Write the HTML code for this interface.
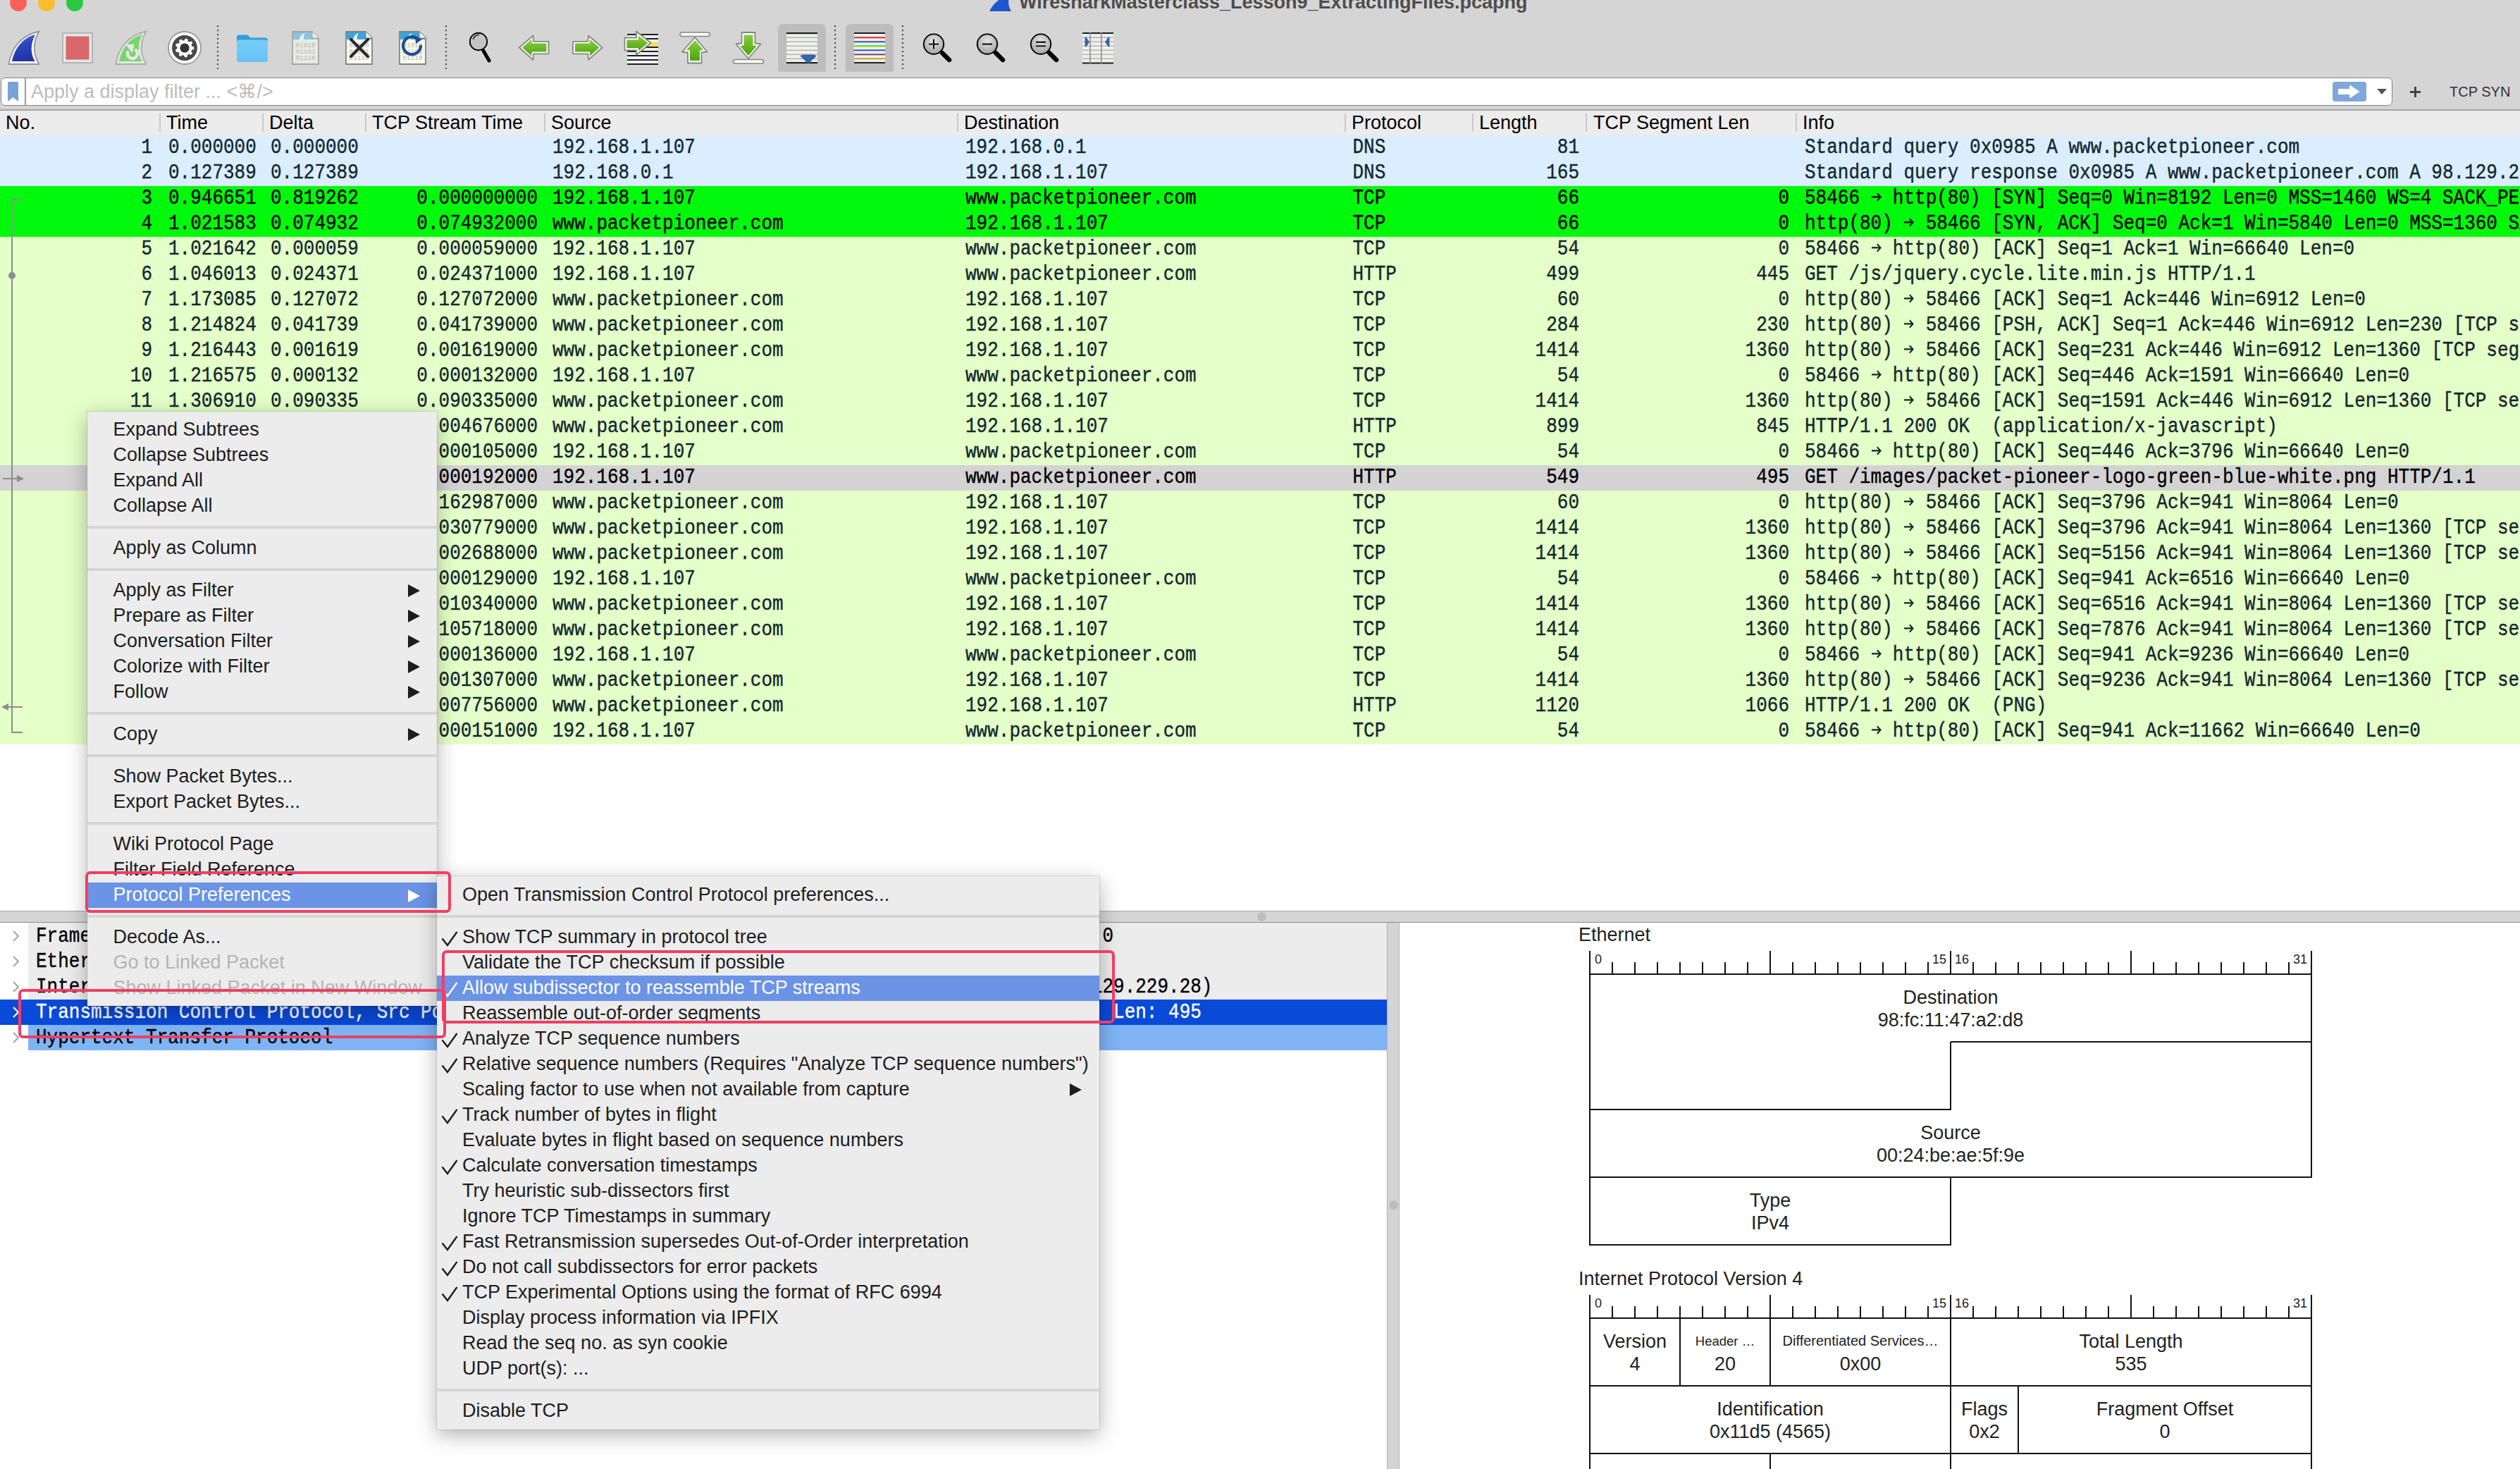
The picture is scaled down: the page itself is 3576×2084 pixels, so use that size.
<!DOCTYPE html><html><head><meta charset="utf-8"><style>
*{margin:0;padding:0;box-sizing:border-box}
html,body{width:3576px;height:2084px;overflow:hidden;background:#d5d5d5;position:relative;font-family:"Liberation Sans", sans-serif}
.a{position:absolute}
.t{position:absolute;white-space:pre;line-height:36px;height:36px}
.m{font-family:"Liberation Mono", monospace;font-size:26px;color:#12272e;transform:scaleY(1.12);transform-origin:0 25px;-webkit-text-stroke-width:0.35px;top:-0.5px}
.tm{top:0}
.ar{display:inline-block;width:15.6px;height:36px;vertical-align:top;position:relative}
.s{font-family:"Liberation Sans", sans-serif;font-size:27px;color:#000}
.r{text-align:right}
.row{position:absolute;left:0;width:3576px;height:36px}
.hd{position:absolute;top:161px;width:2px;height:26px;background:#c9c9c9}
.mi{position:absolute;left:0;right:0;height:36px;line-height:36px;font-size:27px;color:#1d1d1d;white-space:pre}
.sep{position:absolute;left:0;right:0;height:4px;background:#d6d6d6}
.arr{position:absolute;width:0;height:0;border-top:9px solid transparent;border-bottom:9px solid transparent;border-left:17px solid #1d1d1d}
.ck{position:absolute}
.red{position:absolute;border:4px solid #f03e64;border-radius:7px}
.dg{position:absolute;font-size:27px;color:#222;text-align:center;line-height:32px;white-space:pre}
</style></head><body>
<div class="a" style="left:14px;top:-8px;width:24px;height:24px;border-radius:50%;background:#fe5f57"></div>
<div class="a" style="left:54px;top:-8px;width:24px;height:24px;border-radius:50%;background:#febc2e"></div>
<div class="a" style="left:94px;top:-8px;width:24px;height:24px;border-radius:50%;background:#28c840"></div>
<div class="a" style="left:1446px;top:-15px;font-weight:bold;font-size:27px;color:#4d4d4d;white-space:pre;line-height:36px">WiresharkMasterclass_Lesson9_ExtractingFiles.pcapng</div>
<svg class="a" style="left:1402px;top:-6px" width="36" height="24" viewBox="0 0 36 24"><path d="M2 22 C8 10 18 2 32 -2 C28 6 28 14 33 22 Z" fill="#1f55d0"/></svg>
<svg class="a" style="left:0;top:0" width="1600" height="110" viewBox="0 0 1600 110"><defs><linearGradient id="gb" x1="0" y1="0" x2="0.3" y2="1"><stop offset="0" stop-color="#6a7fe0"/><stop offset="0.45" stop-color="#2f47c0"/><stop offset="1" stop-color="#2234a8"/></linearGradient><linearGradient id="gg" x1="0" y1="0" x2="0" y2="1"><stop offset="0" stop-color="#86d042"/><stop offset="1" stop-color="#4ea40c"/></linearGradient><radialGradient id="gz" cx="0.5" cy="0.35" r="0.6"><stop offset="0" stop-color="#e6e6e6"/><stop offset="1" stop-color="#a8a8a8"/></radialGradient><linearGradient id="gf" x1="0" y1="0" x2="0" y2="1"><stop offset="0" stop-color="#78cdf8"/><stop offset="1" stop-color="#64c3f5"/></linearGradient></defs><path d="M12.5 91 C16 68 30 50 55.5 44.5 C47 58 46 76 55.5 91 Z" fill="#fff" stroke="#979797" stroke-width="1.8" stroke-linejoin="round"/><path d="M17 87 C21 68 33 53 50 49 C43 62 43 76 49.5 87 Z" fill="url(#gb)"/><rect x="89" y="47" width="42" height="42" fill="#e8e8e8" stroke="#a9a9a9" stroke-width="1.6"/><rect x="93.5" y="51.5" width="33" height="33" fill="#d96868"/><path d="M164.5 91 C168 68 182 50 207.5 44.5 C199 58 198 76 207.5 91 Z" fill="#e6e6e6" stroke="#acacac" stroke-width="1.8" stroke-linejoin="round"/><path d="M169 87 C173 68 185 53 202 49 C195 62 195 76 201.5 87 Z" fill="#78d66a"/><path d="M191.5 69.9 A7 7 0 1 1 181.9 72.5" fill="none" stroke="#e6e6e6" stroke-width="4.6"/><path d="M178.4 63.6 L190.5 62.4 L188 75.7 Z" fill="#e6e6e6"/><circle cx="262" cy="68" r="23" fill="#fff" stroke="#9c9c9c" stroke-width="1.8"/><circle cx="262" cy="68" r="18" fill="#494949"/><polygon points="262.00,57.60 263.09,55.05 266.02,55.64 266.03,58.41 268.68,60.03 271.16,58.78 273.02,61.11 271.25,63.25 272.24,66.19 274.95,66.82 274.87,69.81 272.14,70.30 271.01,73.20 272.67,75.42 270.70,77.66 268.29,76.28 265.56,77.77 265.41,80.55 262.45,80.99 261.49,78.39 258.44,77.77 256.55,79.80 254.00,78.24 254.93,75.63 252.99,73.20 250.24,73.54 249.28,70.70 251.68,69.30 251.76,66.19 249.43,64.68 250.52,61.90 253.26,62.37 255.32,60.03 254.51,57.38 257.13,55.95 258.92,58.07" fill="#fff" stroke="#fff" stroke-width="0.8" stroke-linejoin="round"/><circle cx="262" cy="68" r="6.6" fill="#333"/><line x1="309" y1="36" x2="309" y2="98" stroke="#555" stroke-width="2.2" stroke-dasharray="2.2 3.8"/><line x1="633" y1="36" x2="633" y2="98" stroke="#555" stroke-width="2.2" stroke-dasharray="2.2 3.8"/><line x1="1185" y1="36" x2="1185" y2="98" stroke="#555" stroke-width="2.2" stroke-dasharray="2.2 3.8"/><line x1="1281" y1="36" x2="1281" y2="98" stroke="#555" stroke-width="2.2" stroke-dasharray="2.2 3.8"/><path d="M336 53 Q336 49.5 339.5 49.5 L350 49.5 Q352 49.5 353.5 51.5 L355 53.5 L376.5 53.5 Q380 53.5 380 57 L380 84 Q380 87.5 376.5 87.5 L339.5 87.5 Q336 87.5 336 84 Z" fill="#2e9ee0"/><path d="M336 60 Q336 56.5 339.5 56.5 L376.5 56.5 Q380 56.5 380 60 L380 84 Q380 87.5 376.5 87.5 L339.5 87.5 Q336 87.5 336 84 Z" fill="url(#gf)"/><path d="M415 45 L443 45 L452 54 L452 91 L415 91 Z" fill="#e9e9e4" stroke="#a5a5a0" stroke-width="1.8"/><path d="M416 46 L442.5 46 L450.5 54 L451 56 L416 56 Z" fill="#8cc3e0"/><path d="M443 45 L443 54 L452 54" fill="#f4f4f0" stroke="#a5a5a0" stroke-width="1.2"/><path d="M425 56 C426 51 429 48 433 47 C431 50 430 53 431 56 Z" fill="#fff" opacity="0.85"/><text x="433.5" y="67" font-size="9.5" font-family="Liberation Mono, monospace" fill="#b8b8b0" text-anchor="middle">01010</text><text x="433.5" y="76" font-size="9.5" font-family="Liberation Mono, monospace" fill="#b8b8b0" text-anchor="middle">01101</text><text x="433.5" y="85" font-size="9.5" font-family="Liberation Mono, monospace" fill="#b8b8b0" text-anchor="middle">01110</text><path d="M491 45 L519 45 L528 54 L528 91 L491 91 Z" fill="#fbfbef" stroke="#84847f" stroke-width="1.8"/><path d="M492 46 L518.5 46 L526.5 54 L527 56 L492 56 Z" fill="#39a5e0"/><path d="M519 45 L519 54 L528 54" fill="#f4f4f0" stroke="#84847f" stroke-width="1.2"/><path d="M501 56 C502 51 505 48 509 47 C507 50 506 53 507 56 Z" fill="#fff" opacity="0.85"/><text x="509.5" y="67" font-size="9.5" font-family="Liberation Mono, monospace" fill="#b8b8b0" text-anchor="middle">01010</text><text x="509.5" y="76" font-size="9.5" font-family="Liberation Mono, monospace" fill="#b8b8b0" text-anchor="middle">01101</text><text x="509.5" y="85" font-size="9.5" font-family="Liberation Mono, monospace" fill="#b8b8b0" text-anchor="middle">01110</text><path d="M498 56 L522 80 M522 56 L498 80" stroke="#2b2b2b" stroke-width="4.2" stroke-linecap="round"/><path d="M567 45 L595 45 L604 54 L604 91 L567 91 Z" fill="#fbfbef" stroke="#84847f" stroke-width="1.8"/><path d="M568 46 L594.5 46 L602.5 54 L603 56 L568 56 Z" fill="#39a5e0"/><path d="M595 45 L595 54 L604 54" fill="#f4f4f0" stroke="#84847f" stroke-width="1.2"/><path d="M577 56 C578 51 581 48 585 47 C583 50 582 53 583 56 Z" fill="#fff" opacity="0.85"/><text x="585.5" y="67" font-size="9.5" font-family="Liberation Mono, monospace" fill="#b8b8b0" text-anchor="middle">01010</text><text x="585.5" y="76" font-size="9.5" font-family="Liberation Mono, monospace" fill="#b8b8b0" text-anchor="middle">01101</text><text x="585.5" y="85" font-size="9.5" font-family="Liberation Mono, monospace" fill="#b8b8b0" text-anchor="middle">01110</text><path d="M593 55.5 A12.5 12.5 0 1 0 597 64" fill="none" stroke="#1f4d96" stroke-width="4.2"/><path d="M589 51 L599 56 L590 62 Z" fill="#1f4d96"/><line x1="686" y1="72" x2="694" y2="86" stroke="#000" stroke-width="5" stroke-linecap="round"/><circle cx="679" cy="59" r="12.2" fill="#c4c4c4" stroke="#000" stroke-width="1.9"/><path d="M671.5 56 A8 8 0 0 1 680 49.5" fill="none" stroke="#111" stroke-width="1.3"/><path d="M736.8 67.5 L756.5 50.5 L757 58.8 L778.5 58.8 L778.5 76.3 L757 76.3 L756.5 84.8 Z" fill="#fff" stroke="#858580" stroke-width="1.8" stroke-linejoin="round"/><path d="M741 67.5 L754.5 55.5 L754.5 61.5 L775.5 61.5 L775.5 73.5 L754.5 73.5 L754.5 79.5 Z" fill="url(#gg)"/><g transform="translate(1667.5 0) scale(-1 1)"><path d="M812.8 67.5 L832.5 50.5 L833 58.8 L854.5 58.8 L854.5 76.3 L833 76.3 L832.5 84.8 Z" fill="#fff" stroke="#858580" stroke-width="1.8" stroke-linejoin="round"/><path d="M817 67.5 L830.5 55.5 L830.5 61.5 L851.5 61.5 L851.5 73.5 L830.5 73.5 L830.5 79.5 Z" fill="url(#gg)"/></g><rect x="890" y="48" width="44" height="44" fill="#efefef"/><rect x="890" y="48" width="44" height="2" fill="#1b2126"/><rect x="890" y="54" width="44" height="2" fill="#1b2126"/><rect x="890" y="66" width="44" height="2" fill="#1b2126"/><rect x="890" y="72" width="44" height="2" fill="#1b2126"/><rect x="890" y="78" width="44" height="2" fill="#1b2126"/><rect x="890" y="84" width="44" height="2" fill="#1b2126"/><rect x="890" y="90" width="44" height="2" fill="#1b2126"/><rect x="918" y="59.5" width="16" height="6" fill="#f6e04a"/><path d="M886.5 53.5 L903 53.5 L903 44.5 L923.5 61 L903 77.8 L903 71.3 L886.5 71.3 Z" fill="#fff" stroke="#858580" stroke-width="1.8" stroke-linejoin="round"/><path d="M889.5 56.5 L906 56.5 L906 50.5 L919.5 61 L906 72 L906 68.3 L889.5 68.3 Z" fill="url(#gg)"/><rect x="965" y="46" width="42.5" height="5.5" rx="2.7" fill="#fff" stroke="#858580" stroke-width="1.6"/><path d="M986 53 L1003.5 73.5 L995.5 74.5 L995.5 89.5 L976 89.5 L976 74.5 L968 73.5 Z" fill="#fff" stroke="#858580" stroke-width="1.8" stroke-linejoin="round"/><path d="M986 57 L998 71 L993 71.5 L993 86 L979 86 L979 71.5 L974 71 Z" fill="url(#gg)"/><rect x="1040.5" y="84.5" width="43" height="5.5" rx="2.7" fill="#fff" stroke="#858580" stroke-width="1.6"/><path d="M1062 83 L1079.5 62.5 L1071.5 61.5 L1071.5 46 L1052.5 46 L1052.5 61.5 L1044.5 62.5 Z" fill="#fff" stroke="#858580" stroke-width="1.8" stroke-linejoin="round"/><path d="M1062 79 L1074 65 L1068.5 64.5 L1068.5 49.5 L1055.5 49.5 L1055.5 64.5 L1050 65 Z" fill="url(#gg)"/><path d="M1104 101.8 L1104 42 Q1104 34 1112 34 L1164 34 Q1172 34 1172 42 L1172 101.8 Z" fill="#bdbdbd"/><path d="M1200 101.8 L1200 42 Q1200 34 1208 34 L1260 34 Q1268 34 1268 42 L1268 101.8 Z" fill="#bdbdbd"/><rect x="1116" y="47" width="44" height="42" fill="#efefef"/><rect x="1116" y="46" width="44" height="2.2" fill="#1b2126"/><rect x="1116" y="88" width="44" height="2.2" fill="#1b2126"/><rect x="1116" y="52.5" width="44" height="1.6" fill="#b5b7ad"/><rect x="1116" y="58.5" width="44" height="1.6" fill="#b5b7ad"/><rect x="1116" y="64.5" width="44" height="1.6" fill="#b5b7ad"/><rect x="1116" y="70.5" width="44" height="1.6" fill="#b5b7ad"/><rect x="1116" y="76.5" width="44" height="1.6" fill="#b5b7ad"/><rect x="1116" y="82.5" width="44" height="1.6" fill="#b5b7ad"/><path d="M1136 80 Q1136 77.5 1140 77.5 L1154 77.5 Q1158 77.5 1158 80 L1148.5 89 Q1147 90.5 1145.5 89 Z" fill="#3465a8"/><rect x="1212" y="47" width="44" height="42" fill="#efefef"/><rect x="1212" y="46" width="44" height="2" fill="#1b2126"/><rect x="1212" y="52.3" width="44" height="2" fill="#e8262a"/><rect x="1212" y="58.3" width="44" height="2" fill="#2f5ca5"/><rect x="1212" y="64.3" width="44" height="2" fill="#5ed312"/><rect x="1212" y="70.3" width="44" height="2" fill="#2f5ca5"/><rect x="1212" y="76.3" width="44" height="2" fill="#6e4581"/><rect x="1212" y="82.3" width="44" height="2" fill="#c8a213"/><rect x="1212" y="88" width="44" height="2" fill="#1b2126"/><line x1="1337" y1="75" x2="1347" y2="85" stroke="#000" stroke-width="6.5" stroke-linecap="round"/><circle cx="1325" cy="62.6" r="14.2" fill="url(#gz)" stroke="#000" stroke-width="1.9"/><path d="M1318 62.6 L1332 62.6 M1325 55.6 L1325 69.6" stroke="#000" stroke-width="1.9"/><line x1="1413" y1="75" x2="1423" y2="85" stroke="#000" stroke-width="6.5" stroke-linecap="round"/><circle cx="1401" cy="62.6" r="14.2" fill="url(#gz)" stroke="#000" stroke-width="1.9"/><path d="M1394 62.6 L1408 62.6" stroke="#000" stroke-width="1.9"/><line x1="1489" y1="75" x2="1499" y2="85" stroke="#000" stroke-width="6.5" stroke-linecap="round"/><circle cx="1477" cy="62.6" r="14.2" fill="url(#gz)" stroke="#000" stroke-width="1.9"/><path d="M1470 59.8 L1484 59.8 M1470 65.4 L1484 65.4" stroke="#000" stroke-width="1.9"/><rect x="1536" y="47" width="44" height="42" fill="#efefef"/><rect x="1536" y="46" width="44" height="2" fill="#1b2126"/><rect x="1536" y="88.5" width="44" height="2" fill="#1b2126"/><rect x="1536" y="52.5" width="44" height="1.5" fill="#b5b7ad"/><rect x="1536" y="58.5" width="44" height="1.5" fill="#b5b7ad"/><rect x="1536" y="64.5" width="44" height="1.5" fill="#b5b7ad"/><rect x="1536" y="70.5" width="44" height="1.5" fill="#b5b7ad"/><rect x="1536" y="76.5" width="44" height="1.5" fill="#b5b7ad"/><rect x="1536" y="82.5" width="44" height="1.5" fill="#b5b7ad"/><rect x="1546.2" y="46" width="1.6" height="44" fill="#8e8e8a"/><rect x="1562" y="46" width="1.6" height="44" fill="#8e8e8a"/><path d="M1539.5 53.5 Q1540 52 1541.5 53 L1546 59.5 L1541.5 66 Q1540 67 1539.5 65.5 Z" fill="#3465a8"/><path d="M1574.5 53.5 Q1574 52 1572.5 53 L1568 59.5 L1572.5 66 Q1574 67 1574.5 65.5 Z" fill="#3465a8"/></svg>
<div class="a" style="left:1px;top:110px;width:3394px;height:40px;background:#fff;border:1.5px solid #858585;border-radius:6px"></div>
<div class="a" style="left:35px;top:111px;width:1.5px;height:38px;background:#9a9a9a"></div>
<svg class="a" style="left:10px;top:116px" width="17" height="29" viewBox="0 0 17 29"><path d="M1 2 Q1 0 3 0 L14 0 Q16 0 16 2 L16 28 L8.5 22 L1 28 Z" fill="#77a3d6"/></svg>
<div class="t s" style="left:44px;top:112px;color:#bcbcbc">Apply a display filter ... &lt;⌘/&gt;</div>
<div class="a" style="left:3310px;top:116px;width:48px;height:28px;background:#7fa7dc;border-radius:4px"></div>
<svg class="a" style="left:3316px;top:119px" width="36" height="22" viewBox="0 0 36 22"><path d="M3 8 L19 8 L19 3 L31 11 L19 19 L19 14 L3 14 Z" fill="#fff" stroke="#fff" stroke-width="2" stroke-linejoin="round"/></svg>
<div class="a" style="left:3373px;top:126px;width:0;height:0;border-left:7px solid transparent;border-right:7px solid transparent;border-top:8px solid #555"></div>
<div class="a" style="left:3420px;top:129px;width:15px;height:3px;background:#444"></div><div class="a" style="left:3426px;top:123px;width:3px;height:15px;background:#444"></div>
<div class="t" style="left:3476px;top:112px;font-size:20px;color:#333">TCP SYN</div>
<div class="a" style="left:0;top:155px;width:3576px;height:2px;background:#a3a3a3"></div>
<div class="a" style="left:0;top:157px;width:3576px;height:35px;background:#ececec"></div>
<div class="t s" style="left:8px;top:156px">No.</div>
<div class="t s" style="left:236px;top:156px">Time</div>
<div class="t s" style="left:382px;top:156px">Delta</div>
<div class="t s" style="left:528px;top:156px">TCP Stream Time</div>
<div class="t s" style="left:782px;top:156px">Source</div>
<div class="t s" style="left:1368px;top:156px">Destination</div>
<div class="t s" style="left:1918px;top:156px">Protocol</div>
<div class="t s" style="left:2099px;top:156px">Length</div>
<div class="t s" style="left:2261px;top:156px">TCP Segment Len</div>
<div class="t s" style="left:2558px;top:156px">Info</div>
<div class="hd" style="left:226px"></div>
<div class="hd" style="left:372px"></div>
<div class="hd" style="left:518px"></div>
<div class="hd" style="left:772px"></div>
<div class="hd" style="left:1358px"></div>
<div class="hd" style="left:1908px"></div>
<div class="hd" style="left:2089px"></div>
<div class="hd" style="left:2250px"></div>
<div class="hd" style="left:2548px"></div>
<div class="row" style="top:192px;background:#daeeff;color:#12272e">
<div class="t m r" style="right:3360px;color:#12272e">1</div>
<div class="t m" style="left:239px;color:#12272e">0.000000</div>
<div class="t m" style="left:384px;color:#12272e">0.000000</div>
<div class="t m r" style="right:2813px;color:#12272e"></div>
<div class="t m" style="left:784px;color:#12272e">192.168.1.107</div>
<div class="t m" style="left:1370px;color:#12272e">192.168.0.1</div>
<div class="t m" style="left:1919.5px;color:#12272e">DNS</div>
<div class="t m r" style="right:1335px;color:#12272e">81</div>
<div class="t m r" style="right:1037px;color:#12272e"></div>
<div class="t m" style="left:2561px;color:#12272e">Standard query 0x0985 A www.packetpioneer.com</div>
</div>
<div class="row" style="top:228px;background:#daeeff;color:#12272e">
<div class="t m r" style="right:3360px;color:#12272e">2</div>
<div class="t m" style="left:239px;color:#12272e">0.127389</div>
<div class="t m" style="left:384px;color:#12272e">0.127389</div>
<div class="t m r" style="right:2813px;color:#12272e"></div>
<div class="t m" style="left:784px;color:#12272e">192.168.0.1</div>
<div class="t m" style="left:1370px;color:#12272e">192.168.1.107</div>
<div class="t m" style="left:1919.5px;color:#12272e">DNS</div>
<div class="t m r" style="right:1335px;color:#12272e">165</div>
<div class="t m r" style="right:1037px;color:#12272e"></div>
<div class="t m" style="left:2561px;color:#12272e">Standard query response 0x0985 A www.packetpioneer.com A 98.129.229.28</div>
</div>
<div class="row" style="top:264px;background:#00f90b;color:#000">
<div class="t m r" style="right:3360px;color:#000">3</div>
<div class="t m" style="left:239px;color:#000">0.946651</div>
<div class="t m" style="left:384px;color:#000">0.819262</div>
<div class="t m r" style="right:2813px;color:#000">0.000000000</div>
<div class="t m" style="left:784px;color:#000">192.168.1.107</div>
<div class="t m" style="left:1370px;color:#000">www.packetpioneer.com</div>
<div class="t m" style="left:1919.5px;color:#000">TCP</div>
<div class="t m r" style="right:1335px;color:#000">66</div>
<div class="t m r" style="right:1037px;color:#000">0</div>
<div class="t m" style="left:2561px;color:#000">58466 <span class="ar"><svg width="16" height="36" style="position:absolute;left:0;top:0"><path d="M1 16.5 H13.5 M8.8 11.8 L13.5 16.5 L8.8 21.2" fill="none" stroke="#000" stroke-width="2"/></svg></span> http(80) [SYN] Seq=0 Win=8192 Len=0 MSS=1460 WS=4 SACK_PERM</div>
</div>
<div class="row" style="top:300px;background:#00f90b;color:#000">
<div class="t m r" style="right:3360px;color:#000">4</div>
<div class="t m" style="left:239px;color:#000">1.021583</div>
<div class="t m" style="left:384px;color:#000">0.074932</div>
<div class="t m r" style="right:2813px;color:#000">0.074932000</div>
<div class="t m" style="left:784px;color:#000">www.packetpioneer.com</div>
<div class="t m" style="left:1370px;color:#000">192.168.1.107</div>
<div class="t m" style="left:1919.5px;color:#000">TCP</div>
<div class="t m r" style="right:1335px;color:#000">66</div>
<div class="t m r" style="right:1037px;color:#000">0</div>
<div class="t m" style="left:2561px;color:#000">http(80) <span class="ar"><svg width="16" height="36" style="position:absolute;left:0;top:0"><path d="M1 16.5 H13.5 M8.8 11.8 L13.5 16.5 L8.8 21.2" fill="none" stroke="#000" stroke-width="2"/></svg></span> 58466 [SYN, ACK] Seq=0 Ack=1 Win=5840 Len=0 MSS=1360 SACK_PERM</div>
</div>
<div class="row" style="top:336px;background:#e4ffc7;color:#12272e">
<div class="t m r" style="right:3360px;color:#12272e">5</div>
<div class="t m" style="left:239px;color:#12272e">1.021642</div>
<div class="t m" style="left:384px;color:#12272e">0.000059</div>
<div class="t m r" style="right:2813px;color:#12272e">0.000059000</div>
<div class="t m" style="left:784px;color:#12272e">192.168.1.107</div>
<div class="t m" style="left:1370px;color:#12272e">www.packetpioneer.com</div>
<div class="t m" style="left:1919.5px;color:#12272e">TCP</div>
<div class="t m r" style="right:1335px;color:#12272e">54</div>
<div class="t m r" style="right:1037px;color:#12272e">0</div>
<div class="t m" style="left:2561px;color:#12272e">58466 <span class="ar"><svg width="16" height="36" style="position:absolute;left:0;top:0"><path d="M1 16.5 H13.5 M8.8 11.8 L13.5 16.5 L8.8 21.2" fill="none" stroke="#12272e" stroke-width="2"/></svg></span> http(80) [ACK] Seq=1 Ack=1 Win=66640 Len=0</div>
</div>
<div class="row" style="top:372px;background:#e4ffc7;color:#12272e">
<div class="t m r" style="right:3360px;color:#12272e">6</div>
<div class="t m" style="left:239px;color:#12272e">1.046013</div>
<div class="t m" style="left:384px;color:#12272e">0.024371</div>
<div class="t m r" style="right:2813px;color:#12272e">0.024371000</div>
<div class="t m" style="left:784px;color:#12272e">192.168.1.107</div>
<div class="t m" style="left:1370px;color:#12272e">www.packetpioneer.com</div>
<div class="t m" style="left:1919.5px;color:#12272e">HTTP</div>
<div class="t m r" style="right:1335px;color:#12272e">499</div>
<div class="t m r" style="right:1037px;color:#12272e">445</div>
<div class="t m" style="left:2561px;color:#12272e">GET /js/jquery.cycle.lite.min.js HTTP/1.1</div>
</div>
<div class="row" style="top:408px;background:#e4ffc7;color:#12272e">
<div class="t m r" style="right:3360px;color:#12272e">7</div>
<div class="t m" style="left:239px;color:#12272e">1.173085</div>
<div class="t m" style="left:384px;color:#12272e">0.127072</div>
<div class="t m r" style="right:2813px;color:#12272e">0.127072000</div>
<div class="t m" style="left:784px;color:#12272e">www.packetpioneer.com</div>
<div class="t m" style="left:1370px;color:#12272e">192.168.1.107</div>
<div class="t m" style="left:1919.5px;color:#12272e">TCP</div>
<div class="t m r" style="right:1335px;color:#12272e">60</div>
<div class="t m r" style="right:1037px;color:#12272e">0</div>
<div class="t m" style="left:2561px;color:#12272e">http(80) <span class="ar"><svg width="16" height="36" style="position:absolute;left:0;top:0"><path d="M1 16.5 H13.5 M8.8 11.8 L13.5 16.5 L8.8 21.2" fill="none" stroke="#12272e" stroke-width="2"/></svg></span> 58466 [ACK] Seq=1 Ack=446 Win=6912 Len=0</div>
</div>
<div class="row" style="top:444px;background:#e4ffc7;color:#12272e">
<div class="t m r" style="right:3360px;color:#12272e">8</div>
<div class="t m" style="left:239px;color:#12272e">1.214824</div>
<div class="t m" style="left:384px;color:#12272e">0.041739</div>
<div class="t m r" style="right:2813px;color:#12272e">0.041739000</div>
<div class="t m" style="left:784px;color:#12272e">www.packetpioneer.com</div>
<div class="t m" style="left:1370px;color:#12272e">192.168.1.107</div>
<div class="t m" style="left:1919.5px;color:#12272e">TCP</div>
<div class="t m r" style="right:1335px;color:#12272e">284</div>
<div class="t m r" style="right:1037px;color:#12272e">230</div>
<div class="t m" style="left:2561px;color:#12272e">http(80) <span class="ar"><svg width="16" height="36" style="position:absolute;left:0;top:0"><path d="M1 16.5 H13.5 M8.8 11.8 L13.5 16.5 L8.8 21.2" fill="none" stroke="#12272e" stroke-width="2"/></svg></span> 58466 [PSH, ACK] Seq=1 Ack=446 Win=6912 Len=230 [TCP segment</div>
</div>
<div class="row" style="top:480px;background:#e4ffc7;color:#12272e">
<div class="t m r" style="right:3360px;color:#12272e">9</div>
<div class="t m" style="left:239px;color:#12272e">1.216443</div>
<div class="t m" style="left:384px;color:#12272e">0.001619</div>
<div class="t m r" style="right:2813px;color:#12272e">0.001619000</div>
<div class="t m" style="left:784px;color:#12272e">www.packetpioneer.com</div>
<div class="t m" style="left:1370px;color:#12272e">192.168.1.107</div>
<div class="t m" style="left:1919.5px;color:#12272e">TCP</div>
<div class="t m r" style="right:1335px;color:#12272e">1414</div>
<div class="t m r" style="right:1037px;color:#12272e">1360</div>
<div class="t m" style="left:2561px;color:#12272e">http(80) <span class="ar"><svg width="16" height="36" style="position:absolute;left:0;top:0"><path d="M1 16.5 H13.5 M8.8 11.8 L13.5 16.5 L8.8 21.2" fill="none" stroke="#12272e" stroke-width="2"/></svg></span> 58466 [ACK] Seq=231 Ack=446 Win=6912 Len=1360 [TCP segment</div>
</div>
<div class="row" style="top:516px;background:#e4ffc7;color:#12272e">
<div class="t m r" style="right:3360px;color:#12272e">10</div>
<div class="t m" style="left:239px;color:#12272e">1.216575</div>
<div class="t m" style="left:384px;color:#12272e">0.000132</div>
<div class="t m r" style="right:2813px;color:#12272e">0.000132000</div>
<div class="t m" style="left:784px;color:#12272e">192.168.1.107</div>
<div class="t m" style="left:1370px;color:#12272e">www.packetpioneer.com</div>
<div class="t m" style="left:1919.5px;color:#12272e">TCP</div>
<div class="t m r" style="right:1335px;color:#12272e">54</div>
<div class="t m r" style="right:1037px;color:#12272e">0</div>
<div class="t m" style="left:2561px;color:#12272e">58466 <span class="ar"><svg width="16" height="36" style="position:absolute;left:0;top:0"><path d="M1 16.5 H13.5 M8.8 11.8 L13.5 16.5 L8.8 21.2" fill="none" stroke="#12272e" stroke-width="2"/></svg></span> http(80) [ACK] Seq=446 Ack=1591 Win=66640 Len=0</div>
</div>
<div class="row" style="top:552px;background:#e4ffc7;color:#12272e">
<div class="t m r" style="right:3360px;color:#12272e">11</div>
<div class="t m" style="left:239px;color:#12272e">1.306910</div>
<div class="t m" style="left:384px;color:#12272e">0.090335</div>
<div class="t m r" style="right:2813px;color:#12272e">0.090335000</div>
<div class="t m" style="left:784px;color:#12272e">www.packetpioneer.com</div>
<div class="t m" style="left:1370px;color:#12272e">192.168.1.107</div>
<div class="t m" style="left:1919.5px;color:#12272e">TCP</div>
<div class="t m r" style="right:1335px;color:#12272e">1414</div>
<div class="t m r" style="right:1037px;color:#12272e">1360</div>
<div class="t m" style="left:2561px;color:#12272e">http(80) <span class="ar"><svg width="16" height="36" style="position:absolute;left:0;top:0"><path d="M1 16.5 H13.5 M8.8 11.8 L13.5 16.5 L8.8 21.2" fill="none" stroke="#12272e" stroke-width="2"/></svg></span> 58466 [ACK] Seq=1591 Ack=446 Win=6912 Len=1360 [TCP segment</div>
</div>
<div class="row" style="top:588px;background:#e4ffc7;color:#12272e">
<div class="t m r" style="right:3360px;color:#12272e">12</div>
<div class="t m" style="left:239px;color:#12272e">1.311586</div>
<div class="t m" style="left:384px;color:#12272e">0.004676</div>
<div class="t m r" style="right:2813px;color:#12272e">0.004676000</div>
<div class="t m" style="left:784px;color:#12272e">www.packetpioneer.com</div>
<div class="t m" style="left:1370px;color:#12272e">192.168.1.107</div>
<div class="t m" style="left:1919.5px;color:#12272e">HTTP</div>
<div class="t m r" style="right:1335px;color:#12272e">899</div>
<div class="t m r" style="right:1037px;color:#12272e">845</div>
<div class="t m" style="left:2561px;color:#12272e">HTTP/1.1 200 OK  (application/x-javascript)</div>
</div>
<div class="row" style="top:624px;background:#e4ffc7;color:#12272e">
<div class="t m r" style="right:3360px;color:#12272e">13</div>
<div class="t m" style="left:239px;color:#12272e">1.311691</div>
<div class="t m" style="left:384px;color:#12272e">0.000105</div>
<div class="t m r" style="right:2813px;color:#12272e">0.000105000</div>
<div class="t m" style="left:784px;color:#12272e">192.168.1.107</div>
<div class="t m" style="left:1370px;color:#12272e">www.packetpioneer.com</div>
<div class="t m" style="left:1919.5px;color:#12272e">TCP</div>
<div class="t m r" style="right:1335px;color:#12272e">54</div>
<div class="t m r" style="right:1037px;color:#12272e">0</div>
<div class="t m" style="left:2561px;color:#12272e">58466 <span class="ar"><svg width="16" height="36" style="position:absolute;left:0;top:0"><path d="M1 16.5 H13.5 M8.8 11.8 L13.5 16.5 L8.8 21.2" fill="none" stroke="#12272e" stroke-width="2"/></svg></span> http(80) [ACK] Seq=446 Ack=3796 Win=66640 Len=0</div>
</div>
<div class="row" style="top:660px;background:#d3d3d3;color:#000">
<div class="t m r" style="right:3360px;color:#000">14</div>
<div class="t m" style="left:239px;color:#000">1.311883</div>
<div class="t m" style="left:384px;color:#000">0.000192</div>
<div class="t m r" style="right:2813px;color:#000">0.000192000</div>
<div class="t m" style="left:784px;color:#000">192.168.1.107</div>
<div class="t m" style="left:1370px;color:#000">www.packetpioneer.com</div>
<div class="t m" style="left:1919.5px;color:#000">HTTP</div>
<div class="t m r" style="right:1335px;color:#000">549</div>
<div class="t m r" style="right:1037px;color:#000">495</div>
<div class="t m" style="left:2561px;color:#000">GET /images/packet-pioneer-logo-green-blue-white.png HTTP/1.1</div>
</div>
<div class="row" style="top:696px;background:#e4ffc7;color:#12272e">
<div class="t m r" style="right:3360px;color:#12272e">15</div>
<div class="t m" style="left:239px;color:#12272e">1.474870</div>
<div class="t m" style="left:384px;color:#12272e">0.162987</div>
<div class="t m r" style="right:2813px;color:#12272e">0.162987000</div>
<div class="t m" style="left:784px;color:#12272e">www.packetpioneer.com</div>
<div class="t m" style="left:1370px;color:#12272e">192.168.1.107</div>
<div class="t m" style="left:1919.5px;color:#12272e">TCP</div>
<div class="t m r" style="right:1335px;color:#12272e">60</div>
<div class="t m r" style="right:1037px;color:#12272e">0</div>
<div class="t m" style="left:2561px;color:#12272e">http(80) <span class="ar"><svg width="16" height="36" style="position:absolute;left:0;top:0"><path d="M1 16.5 H13.5 M8.8 11.8 L13.5 16.5 L8.8 21.2" fill="none" stroke="#12272e" stroke-width="2"/></svg></span> 58466 [ACK] Seq=3796 Ack=941 Win=8064 Len=0</div>
</div>
<div class="row" style="top:732px;background:#e4ffc7;color:#12272e">
<div class="t m r" style="right:3360px;color:#12272e">16</div>
<div class="t m" style="left:239px;color:#12272e">1.505649</div>
<div class="t m" style="left:384px;color:#12272e">0.030779</div>
<div class="t m r" style="right:2813px;color:#12272e">0.030779000</div>
<div class="t m" style="left:784px;color:#12272e">www.packetpioneer.com</div>
<div class="t m" style="left:1370px;color:#12272e">192.168.1.107</div>
<div class="t m" style="left:1919.5px;color:#12272e">TCP</div>
<div class="t m r" style="right:1335px;color:#12272e">1414</div>
<div class="t m r" style="right:1037px;color:#12272e">1360</div>
<div class="t m" style="left:2561px;color:#12272e">http(80) <span class="ar"><svg width="16" height="36" style="position:absolute;left:0;top:0"><path d="M1 16.5 H13.5 M8.8 11.8 L13.5 16.5 L8.8 21.2" fill="none" stroke="#12272e" stroke-width="2"/></svg></span> 58466 [ACK] Seq=3796 Ack=941 Win=8064 Len=1360 [TCP segment</div>
</div>
<div class="row" style="top:768px;background:#e4ffc7;color:#12272e">
<div class="t m r" style="right:3360px;color:#12272e">17</div>
<div class="t m" style="left:239px;color:#12272e">1.508337</div>
<div class="t m" style="left:384px;color:#12272e">0.002688</div>
<div class="t m r" style="right:2813px;color:#12272e">0.002688000</div>
<div class="t m" style="left:784px;color:#12272e">www.packetpioneer.com</div>
<div class="t m" style="left:1370px;color:#12272e">192.168.1.107</div>
<div class="t m" style="left:1919.5px;color:#12272e">TCP</div>
<div class="t m r" style="right:1335px;color:#12272e">1414</div>
<div class="t m r" style="right:1037px;color:#12272e">1360</div>
<div class="t m" style="left:2561px;color:#12272e">http(80) <span class="ar"><svg width="16" height="36" style="position:absolute;left:0;top:0"><path d="M1 16.5 H13.5 M8.8 11.8 L13.5 16.5 L8.8 21.2" fill="none" stroke="#12272e" stroke-width="2"/></svg></span> 58466 [ACK] Seq=5156 Ack=941 Win=8064 Len=1360 [TCP segment</div>
</div>
<div class="row" style="top:804px;background:#e4ffc7;color:#12272e">
<div class="t m r" style="right:3360px;color:#12272e">18</div>
<div class="t m" style="left:239px;color:#12272e">1.508466</div>
<div class="t m" style="left:384px;color:#12272e">0.000129</div>
<div class="t m r" style="right:2813px;color:#12272e">0.000129000</div>
<div class="t m" style="left:784px;color:#12272e">192.168.1.107</div>
<div class="t m" style="left:1370px;color:#12272e">www.packetpioneer.com</div>
<div class="t m" style="left:1919.5px;color:#12272e">TCP</div>
<div class="t m r" style="right:1335px;color:#12272e">54</div>
<div class="t m r" style="right:1037px;color:#12272e">0</div>
<div class="t m" style="left:2561px;color:#12272e">58466 <span class="ar"><svg width="16" height="36" style="position:absolute;left:0;top:0"><path d="M1 16.5 H13.5 M8.8 11.8 L13.5 16.5 L8.8 21.2" fill="none" stroke="#12272e" stroke-width="2"/></svg></span> http(80) [ACK] Seq=941 Ack=6516 Win=66640 Len=0</div>
</div>
<div class="row" style="top:840px;background:#e4ffc7;color:#12272e">
<div class="t m r" style="right:3360px;color:#12272e">19</div>
<div class="t m" style="left:239px;color:#12272e">1.518806</div>
<div class="t m" style="left:384px;color:#12272e">0.010340</div>
<div class="t m r" style="right:2813px;color:#12272e">0.010340000</div>
<div class="t m" style="left:784px;color:#12272e">www.packetpioneer.com</div>
<div class="t m" style="left:1370px;color:#12272e">192.168.1.107</div>
<div class="t m" style="left:1919.5px;color:#12272e">TCP</div>
<div class="t m r" style="right:1335px;color:#12272e">1414</div>
<div class="t m r" style="right:1037px;color:#12272e">1360</div>
<div class="t m" style="left:2561px;color:#12272e">http(80) <span class="ar"><svg width="16" height="36" style="position:absolute;left:0;top:0"><path d="M1 16.5 H13.5 M8.8 11.8 L13.5 16.5 L8.8 21.2" fill="none" stroke="#12272e" stroke-width="2"/></svg></span> 58466 [ACK] Seq=6516 Ack=941 Win=8064 Len=1360 [TCP segment</div>
</div>
<div class="row" style="top:876px;background:#e4ffc7;color:#12272e">
<div class="t m r" style="right:3360px;color:#12272e">20</div>
<div class="t m" style="left:239px;color:#12272e">1.624524</div>
<div class="t m" style="left:384px;color:#12272e">0.105718</div>
<div class="t m r" style="right:2813px;color:#12272e">0.105718000</div>
<div class="t m" style="left:784px;color:#12272e">www.packetpioneer.com</div>
<div class="t m" style="left:1370px;color:#12272e">192.168.1.107</div>
<div class="t m" style="left:1919.5px;color:#12272e">TCP</div>
<div class="t m r" style="right:1335px;color:#12272e">1414</div>
<div class="t m r" style="right:1037px;color:#12272e">1360</div>
<div class="t m" style="left:2561px;color:#12272e">http(80) <span class="ar"><svg width="16" height="36" style="position:absolute;left:0;top:0"><path d="M1 16.5 H13.5 M8.8 11.8 L13.5 16.5 L8.8 21.2" fill="none" stroke="#12272e" stroke-width="2"/></svg></span> 58466 [ACK] Seq=7876 Ack=941 Win=8064 Len=1360 [TCP segment</div>
</div>
<div class="row" style="top:912px;background:#e4ffc7;color:#12272e">
<div class="t m r" style="right:3360px;color:#12272e">21</div>
<div class="t m" style="left:239px;color:#12272e">1.624660</div>
<div class="t m" style="left:384px;color:#12272e">0.000136</div>
<div class="t m r" style="right:2813px;color:#12272e">0.000136000</div>
<div class="t m" style="left:784px;color:#12272e">192.168.1.107</div>
<div class="t m" style="left:1370px;color:#12272e">www.packetpioneer.com</div>
<div class="t m" style="left:1919.5px;color:#12272e">TCP</div>
<div class="t m r" style="right:1335px;color:#12272e">54</div>
<div class="t m r" style="right:1037px;color:#12272e">0</div>
<div class="t m" style="left:2561px;color:#12272e">58466 <span class="ar"><svg width="16" height="36" style="position:absolute;left:0;top:0"><path d="M1 16.5 H13.5 M8.8 11.8 L13.5 16.5 L8.8 21.2" fill="none" stroke="#12272e" stroke-width="2"/></svg></span> http(80) [ACK] Seq=941 Ack=9236 Win=66640 Len=0</div>
</div>
<div class="row" style="top:948px;background:#e4ffc7;color:#12272e">
<div class="t m r" style="right:3360px;color:#12272e">22</div>
<div class="t m" style="left:239px;color:#12272e">1.625967</div>
<div class="t m" style="left:384px;color:#12272e">0.001307</div>
<div class="t m r" style="right:2813px;color:#12272e">0.001307000</div>
<div class="t m" style="left:784px;color:#12272e">www.packetpioneer.com</div>
<div class="t m" style="left:1370px;color:#12272e">192.168.1.107</div>
<div class="t m" style="left:1919.5px;color:#12272e">TCP</div>
<div class="t m r" style="right:1335px;color:#12272e">1414</div>
<div class="t m r" style="right:1037px;color:#12272e">1360</div>
<div class="t m" style="left:2561px;color:#12272e">http(80) <span class="ar"><svg width="16" height="36" style="position:absolute;left:0;top:0"><path d="M1 16.5 H13.5 M8.8 11.8 L13.5 16.5 L8.8 21.2" fill="none" stroke="#12272e" stroke-width="2"/></svg></span> 58466 [ACK] Seq=9236 Ack=941 Win=8064 Len=1360 [TCP segment</div>
</div>
<div class="row" style="top:984px;background:#e4ffc7;color:#12272e">
<div class="t m r" style="right:3360px;color:#12272e">23</div>
<div class="t m" style="left:239px;color:#12272e">1.633723</div>
<div class="t m" style="left:384px;color:#12272e">0.007756</div>
<div class="t m r" style="right:2813px;color:#12272e">0.007756000</div>
<div class="t m" style="left:784px;color:#12272e">www.packetpioneer.com</div>
<div class="t m" style="left:1370px;color:#12272e">192.168.1.107</div>
<div class="t m" style="left:1919.5px;color:#12272e">HTTP</div>
<div class="t m r" style="right:1335px;color:#12272e">1120</div>
<div class="t m r" style="right:1037px;color:#12272e">1066</div>
<div class="t m" style="left:2561px;color:#12272e">HTTP/1.1 200 OK  (PNG)</div>
</div>
<div class="row" style="top:1020px;background:#e4ffc7;color:#12272e">
<div class="t m r" style="right:3360px;color:#12272e">24</div>
<div class="t m" style="left:239px;color:#12272e">1.633874</div>
<div class="t m" style="left:384px;color:#12272e">0.000151</div>
<div class="t m r" style="right:2813px;color:#12272e">0.000151000</div>
<div class="t m" style="left:784px;color:#12272e">192.168.1.107</div>
<div class="t m" style="left:1370px;color:#12272e">www.packetpioneer.com</div>
<div class="t m" style="left:1919.5px;color:#12272e">TCP</div>
<div class="t m r" style="right:1335px;color:#12272e">54</div>
<div class="t m r" style="right:1037px;color:#12272e">0</div>
<div class="t m" style="left:2561px;color:#12272e">58466 <span class="ar"><svg width="16" height="36" style="position:absolute;left:0;top:0"><path d="M1 16.5 H13.5 M8.8 11.8 L13.5 16.5 L8.8 21.2" fill="none" stroke="#12272e" stroke-width="2"/></svg></span> http(80) [ACK] Seq=941 Ack=11662 Win=66640 Len=0</div>
</div>
<div class="a" style="left:16px;top:282px;width:2px;height:757px;background:#8d8d8d"></div>
<div class="a" style="left:16px;top:282px;width:16px;height:2px;background:#8d8d8d"></div>
<div class="a" style="left:16px;top:1038px;width:16px;height:2px;background:#8d8d8d"></div>
<div class="a" style="left:12px;top:386px;width:10px;height:10px;border-radius:50%;background:#8d8d8d"></div>
<div class="a" style="left:4px;top:678px;width:22px;height:2px;background:#8d8d8d"></div>
<div class="a" style="left:24px;top:674px;width:0;height:0;border-top:5px solid transparent;border-bottom:5px solid transparent;border-left:10px solid #8d8d8d"></div>
<div class="a" style="left:10px;top:1002px;width:22px;height:2px;background:#8d8d8d"></div>
<div class="a" style="left:2px;top:998px;width:0;height:0;border-top:5px solid transparent;border-bottom:5px solid transparent;border-right:10px solid #8d8d8d"></div>
<div class="a" style="left:0;top:1056px;width:3576px;height:237px;background:#fff"></div>
<div class="a" style="left:0;top:1292px;width:3576px;height:17px;background:#d5d5d5;border-top:1.5px solid #ababab;border-bottom:1.5px solid #8c8c8c"></div>
<div class="a" style="left:1784px;top:1294px;width:13px;height:13px;border-radius:50%;background:#bdbdbd"></div>
<div class="a" style="left:0;top:1309px;width:1969px;height:776px;background:#fff"></div><div class="a" style="left:40px;top:1309px;width:1929px;height:2px;background:#ececec"></div>
<div class="a" style="left:40px;top:1310px;width:1929px;height:36px;background:#ececec"></div>
<svg class="a" style="left:17px;top:1319px" width="12" height="18" viewBox="0 0 12 18"><path d="M2 2 L9 9 L2 16" fill="none" stroke="#a8a8a8" stroke-width="2.2"/></svg>
<div class="t m" style="left:51px;top:1310.5px;color:#000">Frame 14: 549 bytes on wire (4392 bits), 549 bytes captured (4392 bits) on interface en0 (3), id 0</div>
<div class="a" style="left:40px;top:1346px;width:1929px;height:36px;background:#ececec"></div>
<svg class="a" style="left:17px;top:1355px" width="12" height="18" viewBox="0 0 12 18"><path d="M2 2 L9 9 L2 16" fill="none" stroke="#a8a8a8" stroke-width="2.2"/></svg>
<div class="t m" style="left:51px;top:1346.5px;color:#000">Ethernet II, Src: Apple_ae:5f:9e (00:24:be:ae:5f:9e), Dst: Cisco_47:a2:d8 (98:fc:11:47:a2:d8)</div>
<div class="a" style="left:40px;top:1382px;width:1929px;height:36px;background:#ececec"></div>
<svg class="a" style="left:17px;top:1391px" width="12" height="18" viewBox="0 0 12 18"><path d="M2 2 L9 9 L2 16" fill="none" stroke="#a8a8a8" stroke-width="2.2"/></svg>
<div class="t m" style="left:51px;top:1382.5px;color:#000">Internet Protocol Version 4, Src: 192.168.1.107 (192.168.1.107), Dst: www.packetpioneer.com (98.129.229.28)</div>
<div class="a" style="left:0;top:1418px;width:1969px;height:36px;background:#0a4ad9"></div>
<svg class="a" style="left:17px;top:1427px" width="12" height="18" viewBox="0 0 12 18"><path d="M2 2 L9 9 L2 16" fill="none" stroke="#fff" stroke-width="2.2"/></svg>
<div class="t m" style="left:51px;top:1418.5px;color:#fff">Transmission Control Protocol, Src Port: 58466 (58466), Dst Port: http (80), Seq: 446, Ack: 3796, Len: 495</div>
<div class="a" style="left:40px;top:1454px;width:1929px;height:36px;background:#7fb4f5"></div>
<svg class="a" style="left:17px;top:1463px" width="12" height="18" viewBox="0 0 12 18"><path d="M2 2 L9 9 L2 16" fill="none" stroke="#a8a8a8" stroke-width="2.2"/></svg>
<div class="t m" style="left:51px;top:1454.5px;color:#000">Hypertext Transfer Protocol</div>
<div class="a" style="left:1968px;top:1309px;width:17.5px;height:776px;background:#d4d4d4;border-left:1px solid #b0b0b0;border-right:1px solid #b0b0b0"></div>
<div class="a" style="left:1971px;top:1703px;width:13px;height:13px;border-radius:50%;background:#bdbdbd"></div>
<div class="a" style="left:1985.5px;top:1309px;width:1591px;height:776px;background:#fff"></div>
<svg class="a" style="left:0;top:0" width="3576" height="2084" viewBox="0 0 3576 2084"><text x="2240" y="1335" font-size="27" fill="#222">Ethernet</text><line x1="2255" y1="1382" x2="3281" y2="1382" stroke="#111" stroke-width="2"/><line x1="2256" y1="1349" x2="2256" y2="1382" stroke="#111" stroke-width="2"/><line x1="2288" y1="1365" x2="2288" y2="1382" stroke="#111" stroke-width="2"/><line x1="2320" y1="1365" x2="2320" y2="1382" stroke="#111" stroke-width="2"/><line x1="2352" y1="1365" x2="2352" y2="1382" stroke="#111" stroke-width="2"/><line x1="2384" y1="1365" x2="2384" y2="1382" stroke="#111" stroke-width="2"/><line x1="2416" y1="1365" x2="2416" y2="1382" stroke="#111" stroke-width="2"/><line x1="2448" y1="1365" x2="2448" y2="1382" stroke="#111" stroke-width="2"/><line x1="2480" y1="1365" x2="2480" y2="1382" stroke="#111" stroke-width="2"/><line x1="2512" y1="1349" x2="2512" y2="1382" stroke="#111" stroke-width="2"/><line x1="2544" y1="1365" x2="2544" y2="1382" stroke="#111" stroke-width="2"/><line x1="2576" y1="1365" x2="2576" y2="1382" stroke="#111" stroke-width="2"/><line x1="2608" y1="1365" x2="2608" y2="1382" stroke="#111" stroke-width="2"/><line x1="2640" y1="1365" x2="2640" y2="1382" stroke="#111" stroke-width="2"/><line x1="2672" y1="1365" x2="2672" y2="1382" stroke="#111" stroke-width="2"/><line x1="2704" y1="1365" x2="2704" y2="1382" stroke="#111" stroke-width="2"/><line x1="2736" y1="1365" x2="2736" y2="1382" stroke="#111" stroke-width="2"/><line x1="2768" y1="1349" x2="2768" y2="1382" stroke="#111" stroke-width="2"/><line x1="2800" y1="1365" x2="2800" y2="1382" stroke="#111" stroke-width="2"/><line x1="2832" y1="1365" x2="2832" y2="1382" stroke="#111" stroke-width="2"/><line x1="2864" y1="1365" x2="2864" y2="1382" stroke="#111" stroke-width="2"/><line x1="2896" y1="1365" x2="2896" y2="1382" stroke="#111" stroke-width="2"/><line x1="2928" y1="1365" x2="2928" y2="1382" stroke="#111" stroke-width="2"/><line x1="2960" y1="1365" x2="2960" y2="1382" stroke="#111" stroke-width="2"/><line x1="2992" y1="1365" x2="2992" y2="1382" stroke="#111" stroke-width="2"/><line x1="3024" y1="1349" x2="3024" y2="1382" stroke="#111" stroke-width="2"/><line x1="3056" y1="1365" x2="3056" y2="1382" stroke="#111" stroke-width="2"/><line x1="3088" y1="1365" x2="3088" y2="1382" stroke="#111" stroke-width="2"/><line x1="3120" y1="1365" x2="3120" y2="1382" stroke="#111" stroke-width="2"/><line x1="3152" y1="1365" x2="3152" y2="1382" stroke="#111" stroke-width="2"/><line x1="3184" y1="1365" x2="3184" y2="1382" stroke="#111" stroke-width="2"/><line x1="3216" y1="1365" x2="3216" y2="1382" stroke="#111" stroke-width="2"/><line x1="3248" y1="1365" x2="3248" y2="1382" stroke="#111" stroke-width="2"/><line x1="3280" y1="1349" x2="3280" y2="1382" stroke="#111" stroke-width="2"/><text x="2263" y="1367" font-size="18" fill="#222">0</text><text x="2762" y="1367" font-size="18" fill="#222" text-anchor="end">15</text><text x="2774" y="1367" font-size="18" fill="#222">16</text><text x="3274" y="1367" font-size="18" fill="#222" text-anchor="end">31</text><line x1="2256" y1="1382" x2="2256" y2="1767" stroke="#111" stroke-width="2"/><line x1="3280" y1="1382" x2="3280" y2="1671" stroke="#111" stroke-width="2"/><line x1="2768" y1="1478" x2="3281" y2="1478" stroke="#111" stroke-width="2"/><line x1="2768" y1="1478" x2="2768" y2="1574" stroke="#111" stroke-width="2"/><line x1="2255" y1="1574" x2="2769" y2="1574" stroke="#111" stroke-width="2"/><line x1="2255" y1="1670" x2="3281" y2="1670" stroke="#111" stroke-width="2"/><line x1="2768" y1="1670" x2="2768" y2="1767" stroke="#111" stroke-width="2"/><line x1="2255" y1="1766" x2="2769" y2="1766" stroke="#111" stroke-width="2"/><text x="2768" y="1424" font-size="27" fill="#222" text-anchor="middle">Destination</text><text x="2768" y="1456" font-size="27" fill="#222" text-anchor="middle">98:fc:11:47:a2:d8</text><text x="2768" y="1616" font-size="27" fill="#222" text-anchor="middle">Source</text><text x="2768" y="1648" font-size="27" fill="#222" text-anchor="middle">00:24:be:ae:5f:9e</text><text x="2512" y="1712" font-size="27" fill="#222" text-anchor="middle">Type</text><text x="2512" y="1744" font-size="27" fill="#222" text-anchor="middle">IPv4</text><text x="2240" y="1823" font-size="27" fill="#222">Internet Protocol Version 4</text><line x1="2255" y1="1870" x2="3281" y2="1870" stroke="#111" stroke-width="2"/><line x1="2256" y1="1837" x2="2256" y2="1870" stroke="#111" stroke-width="2"/><line x1="2288" y1="1853" x2="2288" y2="1870" stroke="#111" stroke-width="2"/><line x1="2320" y1="1853" x2="2320" y2="1870" stroke="#111" stroke-width="2"/><line x1="2352" y1="1853" x2="2352" y2="1870" stroke="#111" stroke-width="2"/><line x1="2384" y1="1853" x2="2384" y2="1870" stroke="#111" stroke-width="2"/><line x1="2416" y1="1853" x2="2416" y2="1870" stroke="#111" stroke-width="2"/><line x1="2448" y1="1853" x2="2448" y2="1870" stroke="#111" stroke-width="2"/><line x1="2480" y1="1853" x2="2480" y2="1870" stroke="#111" stroke-width="2"/><line x1="2512" y1="1837" x2="2512" y2="1870" stroke="#111" stroke-width="2"/><line x1="2544" y1="1853" x2="2544" y2="1870" stroke="#111" stroke-width="2"/><line x1="2576" y1="1853" x2="2576" y2="1870" stroke="#111" stroke-width="2"/><line x1="2608" y1="1853" x2="2608" y2="1870" stroke="#111" stroke-width="2"/><line x1="2640" y1="1853" x2="2640" y2="1870" stroke="#111" stroke-width="2"/><line x1="2672" y1="1853" x2="2672" y2="1870" stroke="#111" stroke-width="2"/><line x1="2704" y1="1853" x2="2704" y2="1870" stroke="#111" stroke-width="2"/><line x1="2736" y1="1853" x2="2736" y2="1870" stroke="#111" stroke-width="2"/><line x1="2768" y1="1837" x2="2768" y2="1870" stroke="#111" stroke-width="2"/><line x1="2800" y1="1853" x2="2800" y2="1870" stroke="#111" stroke-width="2"/><line x1="2832" y1="1853" x2="2832" y2="1870" stroke="#111" stroke-width="2"/><line x1="2864" y1="1853" x2="2864" y2="1870" stroke="#111" stroke-width="2"/><line x1="2896" y1="1853" x2="2896" y2="1870" stroke="#111" stroke-width="2"/><line x1="2928" y1="1853" x2="2928" y2="1870" stroke="#111" stroke-width="2"/><line x1="2960" y1="1853" x2="2960" y2="1870" stroke="#111" stroke-width="2"/><line x1="2992" y1="1853" x2="2992" y2="1870" stroke="#111" stroke-width="2"/><line x1="3024" y1="1837" x2="3024" y2="1870" stroke="#111" stroke-width="2"/><line x1="3056" y1="1853" x2="3056" y2="1870" stroke="#111" stroke-width="2"/><line x1="3088" y1="1853" x2="3088" y2="1870" stroke="#111" stroke-width="2"/><line x1="3120" y1="1853" x2="3120" y2="1870" stroke="#111" stroke-width="2"/><line x1="3152" y1="1853" x2="3152" y2="1870" stroke="#111" stroke-width="2"/><line x1="3184" y1="1853" x2="3184" y2="1870" stroke="#111" stroke-width="2"/><line x1="3216" y1="1853" x2="3216" y2="1870" stroke="#111" stroke-width="2"/><line x1="3248" y1="1853" x2="3248" y2="1870" stroke="#111" stroke-width="2"/><line x1="3280" y1="1837" x2="3280" y2="1870" stroke="#111" stroke-width="2"/><text x="2263" y="1855" font-size="18" fill="#222">0</text><text x="2762" y="1855" font-size="18" fill="#222" text-anchor="end">15</text><text x="2774" y="1855" font-size="18" fill="#222">16</text><text x="3274" y="1855" font-size="18" fill="#222" text-anchor="end">31</text><line x1="2256" y1="1870" x2="2256" y2="2084" stroke="#111" stroke-width="2"/><line x1="3280" y1="1870" x2="3280" y2="2084" stroke="#111" stroke-width="2"/><line x1="2255" y1="1966" x2="3281" y2="1966" stroke="#111" stroke-width="2"/><line x1="2255" y1="2062" x2="3281" y2="2062" stroke="#111" stroke-width="2"/><line x1="2384" y1="1870" x2="2384" y2="1966" stroke="#111" stroke-width="2"/><line x1="2512" y1="1870" x2="2512" y2="1966" stroke="#111" stroke-width="2"/><line x1="2768" y1="1870" x2="2768" y2="1966" stroke="#111" stroke-width="2"/><line x1="2768" y1="1966" x2="2768" y2="2062" stroke="#111" stroke-width="2"/><line x1="2864" y1="1966" x2="2864" y2="2062" stroke="#111" stroke-width="2"/><line x1="2512" y1="2062" x2="2512" y2="2084" stroke="#111" stroke-width="2"/><line x1="2768" y1="2062" x2="2768" y2="2084" stroke="#111" stroke-width="2"/><text x="2320" y="1912" font-size="27" fill="#222" text-anchor="middle">Version</text><text x="2320" y="1944" font-size="27" fill="#222" text-anchor="middle">4</text><text x="2448" y="1909" font-size="18.5" fill="#222" text-anchor="middle">Header …</text><text x="2448" y="1944" font-size="27" fill="#222" text-anchor="middle">20</text><text x="2640" y="1909" font-size="20" fill="#222" text-anchor="middle">Differentiated Services…</text><text x="2640" y="1944" font-size="27" fill="#222" text-anchor="middle">0x00</text><text x="3024" y="1912" font-size="27" fill="#222" text-anchor="middle">Total Length</text><text x="3024" y="1944" font-size="27" fill="#222" text-anchor="middle">535</text><text x="2512" y="2008" font-size="27" fill="#222" text-anchor="middle">Identification</text><text x="2512" y="2040" font-size="27" fill="#222" text-anchor="middle">0x11d5 (4565)</text><text x="2816.0" y="2008" font-size="27" fill="#222" text-anchor="middle">Flags</text><text x="2816.0" y="2040" font-size="27" fill="#222" text-anchor="middle">0x2</text><text x="3072.0" y="2008" font-size="27" fill="#222" text-anchor="middle">Fragment Offset</text><text x="3072.0" y="2040" font-size="27" fill="#222" text-anchor="middle">0</text></svg>
<div class="a" style="left:124px;top:584px;width:496px;height:843px;background:#ececec;box-shadow:0 8px 28px rgba(0,0,0,0.30),0 0 0 1px rgba(0,0,0,0.10)">
<div class="mi" style="top:7px;left:36.5px;color:#1d1d1d">Expand Subtrees</div>
<div class="mi" style="top:43px;left:36.5px;color:#1d1d1d">Collapse Subtrees</div>
<div class="mi" style="top:79px;left:36.5px;color:#1d1d1d">Expand All</div>
<div class="mi" style="top:115px;left:36.5px;color:#1d1d1d">Collapse All</div>
<div class="sep" style="top:162px"></div>
<div class="mi" style="top:175px;left:36.5px;color:#1d1d1d">Apply as Column</div>
<div class="sep" style="top:222px"></div>
<div class="mi" style="top:235px;left:36.5px;color:#1d1d1d">Apply as Filter</div>
<div class="arr" style="left:455px;top:245px;border-left-color:#1d1d1d"></div>
<div class="mi" style="top:271px;left:36.5px;color:#1d1d1d">Prepare as Filter</div>
<div class="arr" style="left:455px;top:281px;border-left-color:#1d1d1d"></div>
<div class="mi" style="top:307px;left:36.5px;color:#1d1d1d">Conversation Filter</div>
<div class="arr" style="left:455px;top:317px;border-left-color:#1d1d1d"></div>
<div class="mi" style="top:343px;left:36.5px;color:#1d1d1d">Colorize with Filter</div>
<div class="arr" style="left:455px;top:353px;border-left-color:#1d1d1d"></div>
<div class="mi" style="top:379px;left:36.5px;color:#1d1d1d">Follow</div>
<div class="arr" style="left:455px;top:389px;border-left-color:#1d1d1d"></div>
<div class="sep" style="top:426px"></div>
<div class="mi" style="top:439px;left:36.5px;color:#1d1d1d">Copy</div>
<div class="arr" style="left:455px;top:449px;border-left-color:#1d1d1d"></div>
<div class="sep" style="top:486px"></div>
<div class="mi" style="top:499px;left:36.5px;color:#1d1d1d">Show Packet Bytes...</div>
<div class="mi" style="top:535px;left:36.5px;color:#1d1d1d">Export Packet Bytes...</div>
<div class="sep" style="top:582px"></div>
<div class="mi" style="top:595px;left:36.5px;color:#1d1d1d">Wiki Protocol Page</div>
<div class="mi" style="top:631px;left:36.5px;color:#1d1d1d">Filter Field Reference</div>
<div class="a" style="left:0;top:668px;width:496px;height:36px;background:#6b93e6"></div>
<div class="mi" style="top:667px;left:36.5px;color:#fff">Protocol Preferences</div>
<div class="arr" style="left:455px;top:678px;border-left-color:#fff"></div>
<div class="sep" style="top:714px"></div>
<div class="mi" style="top:727px;left:36.5px;color:#1d1d1d">Decode As...</div>
<div class="mi" style="top:763px;left:36.5px;color:#b4b4b4">Go to Linked Packet</div>
<div class="mi" style="top:799px;left:36.5px;color:#b4b4b4">Show Linked Packet in New Window</div>
</div>
<div class="a" style="left:620px;top:1243px;width:940px;height:785px;background:#ececec;box-shadow:0 8px 28px rgba(0,0,0,0.30),0 0 0 1px rgba(0,0,0,0.10)">
<div class="mi" style="top:8px;left:36px;color:#1d1d1d">Open Transmission Control Protocol preferences...</div>
<div class="sep" style="top:55px"></div>
<div class="mi" style="top:68px;left:36px;color:#1d1d1d">Show TCP summary in protocol tree</div>
<svg class="a" style="left:6px;top:78px" width="24" height="22" viewBox="0 0 24 22"><path d="M1.5 10.5 L9 20 L22.5 1" fill="none" stroke="#1d1d1d" stroke-width="2.4"/></svg>
<div class="mi" style="top:104px;left:36px;color:#1d1d1d">Validate the TCP checksum if possible</div>
<div class="a" style="left:0;top:141px;width:940px;height:36px;background:#6b93e6"></div>
<div class="mi" style="top:140px;left:36px;color:#fff">Allow subdissector to reassemble TCP streams</div>
<svg class="a" style="left:6px;top:150px" width="24" height="22" viewBox="0 0 24 22"><path d="M1.5 10.5 L9 20 L22.5 1" fill="none" stroke="#fff" stroke-width="2.4"/></svg>
<div class="mi" style="top:176px;left:36px;color:#1d1d1d">Reassemble out-of-order segments</div>
<div class="mi" style="top:212px;left:36px;color:#1d1d1d">Analyze TCP sequence numbers</div>
<svg class="a" style="left:6px;top:222px" width="24" height="22" viewBox="0 0 24 22"><path d="M1.5 10.5 L9 20 L22.5 1" fill="none" stroke="#1d1d1d" stroke-width="2.4"/></svg>
<div class="mi" style="top:248px;left:36px;color:#1d1d1d">Relative sequence numbers (Requires &quot;Analyze TCP sequence numbers&quot;)</div>
<svg class="a" style="left:6px;top:258px" width="24" height="22" viewBox="0 0 24 22"><path d="M1.5 10.5 L9 20 L22.5 1" fill="none" stroke="#1d1d1d" stroke-width="2.4"/></svg>
<div class="mi" style="top:284px;left:36px;color:#1d1d1d">Scaling factor to use when not available from capture</div>
<div class="arr" style="left:898px;top:294px"></div>
<div class="mi" style="top:320px;left:36px;color:#1d1d1d">Track number of bytes in flight</div>
<svg class="a" style="left:6px;top:330px" width="24" height="22" viewBox="0 0 24 22"><path d="M1.5 10.5 L9 20 L22.5 1" fill="none" stroke="#1d1d1d" stroke-width="2.4"/></svg>
<div class="mi" style="top:356px;left:36px;color:#1d1d1d">Evaluate bytes in flight based on sequence numbers</div>
<div class="mi" style="top:392px;left:36px;color:#1d1d1d">Calculate conversation timestamps</div>
<svg class="a" style="left:6px;top:402px" width="24" height="22" viewBox="0 0 24 22"><path d="M1.5 10.5 L9 20 L22.5 1" fill="none" stroke="#1d1d1d" stroke-width="2.4"/></svg>
<div class="mi" style="top:428px;left:36px;color:#1d1d1d">Try heuristic sub-dissectors first</div>
<div class="mi" style="top:464px;left:36px;color:#1d1d1d">Ignore TCP Timestamps in summary</div>
<div class="mi" style="top:500px;left:36px;color:#1d1d1d">Fast Retransmission supersedes Out-of-Order interpretation</div>
<svg class="a" style="left:6px;top:510px" width="24" height="22" viewBox="0 0 24 22"><path d="M1.5 10.5 L9 20 L22.5 1" fill="none" stroke="#1d1d1d" stroke-width="2.4"/></svg>
<div class="mi" style="top:536px;left:36px;color:#1d1d1d">Do not call subdissectors for error packets</div>
<svg class="a" style="left:6px;top:546px" width="24" height="22" viewBox="0 0 24 22"><path d="M1.5 10.5 L9 20 L22.5 1" fill="none" stroke="#1d1d1d" stroke-width="2.4"/></svg>
<div class="mi" style="top:572px;left:36px;color:#1d1d1d">TCP Experimental Options using the format of RFC 6994</div>
<svg class="a" style="left:6px;top:582px" width="24" height="22" viewBox="0 0 24 22"><path d="M1.5 10.5 L9 20 L22.5 1" fill="none" stroke="#1d1d1d" stroke-width="2.4"/></svg>
<div class="mi" style="top:608px;left:36px;color:#1d1d1d">Display process information via IPFIX</div>
<div class="mi" style="top:644px;left:36px;color:#1d1d1d">Read the seq no. as syn cookie</div>
<div class="mi" style="top:680px;left:36px;color:#1d1d1d">UDP port(s): ...</div>
<div class="sep" style="top:727px"></div>
<div class="mi" style="top:740px;left:36px;color:#1d1d1d">Disable TCP</div>
</div>
<div class="red" style="left:121px;top:1236px;width:519px;height:59px"></div>
<div class="red" style="left:26px;top:1403px;width:607px;height:70px"></div>
<div class="red" style="left:627px;top:1348px;width:955px;height:104px"></div>
</body></html>
